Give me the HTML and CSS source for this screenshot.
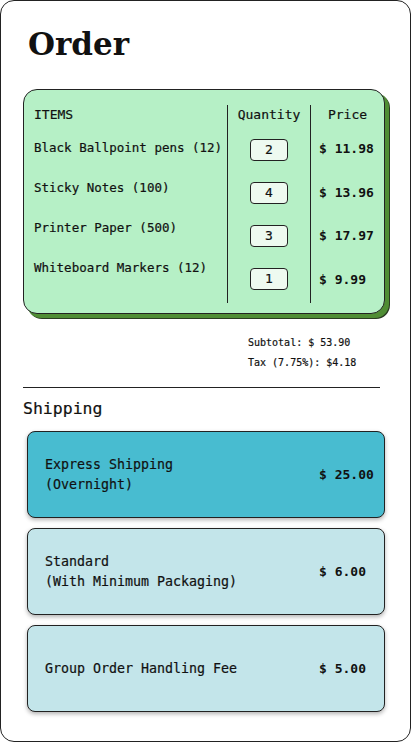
FILE: index.html
```html
<!DOCTYPE html>
<html>
<head>
<meta charset="utf-8">
<link rel="stylesheet" href="styles.css">
</head>
<body>
<div class="order">
  <h1 class="title">Order</h1>
  <div class="items-card">
    <div class="grid">
      <div class="col col-items">
        <div class="col-head head-left">ITEMS</div>
        <div class="list list-items">
          <div class="item">Black Ballpoint pens (12)</div>
          <div class="item">Sticky Notes (100)</div>
          <div class="item">Printer Paper (500)</div>
          <div class="item">Whiteboard Markers (12)</div>
        </div>
      </div>
      <div class="col col-qty">
        <div class="col-head">Quantity</div>
        <div class="list list-qty">
          <div class="qty">2</div>
          <div class="qty">4</div>
          <div class="qty">3</div>
          <div class="qty">1</div>
        </div>
      </div>
      <div class="col col-price">
        <div class="col-head">Price</div>
        <div class="list list-price">
          <div class="price">$ 11.98</div>
          <div class="price">$ 13.96</div>
          <div class="price">$ 17.97</div>
          <div class="price">$ 9.99</div>
        </div>
      </div>
    </div>
  </div>
  <div class="totals">
    <div>Subtotal: $ 53.90</div>
    <div>Tax (7.75%): $4.18</div>
  </div>
  <div class="rule"></div>
  <h2 class="ship-title">Shipping</h2>
  <div class="ship-list">
    <div class="ship-card selected">
      <div class="ship-name">Express Shipping<br>(Overnight)</div>
      <div class="ship-price">$ 25.00</div>
    </div>
    <div class="ship-card">
      <div class="ship-name">Standard<br>(With Minimum Packaging)</div>
      <div class="ship-price">$ 6.00</div>
    </div>
    <div class="ship-card">
      <div class="ship-name">Group Order Handling Fee</div>
      <div class="ship-price">$ 5.00</div>
    </div>
  </div>
</div>
</body>
</html>
```
FILE: styles.css
```css
* { box-sizing: border-box; }
html, body { margin: 0; padding: 0; background: #fff; }
body {
  font-family: "DejaVu Sans Mono", "Liberation Mono", monospace;
  color: #111;
  -webkit-text-stroke: 0.2px #111;
}
.order {
  width: 411px;
  height: 742px;
  border: 1px solid #222;
  border-radius: 14px;
  padding: 23px 0 0 0;
}
.title {
  margin: 0 0 25px 27px;
  font-family: "DejaVu Serif", "Liberation Serif", serif;
  font-weight: bold;
  font-size: 31px;
  line-height: 40px;
  height: 40px;
  -webkit-text-stroke: 0;
}
.items-card {
  margin-left: 22px;
  width: 362px;
  height: 225px;
  background: #b6f0c6;
  border: 1px solid #222;
  border-radius: 14px;
  box-shadow: 4px 4px 0 0 #4f8d34, 5px 5px 0 0 #2a3a22;
  padding: 15px 0 10px 0;
}
.grid {
  display: grid;
  grid-template-columns: 203px 83px 1fr;
  height: 198px;
}
.col { display: flex; flex-direction: column; }
.col-qty, .col-price { border-left: 1px solid #222; align-items: center; }
.col-head {
  font-size: 13px;
  line-height: 20px;
  height: 20px;
  text-align: center;
}
.head-left { padding-left: 10px; text-align: left; }
.list { display: flex; flex-direction: column; }
.list-items { padding: 13px 0 0 10px; gap: 20px; }
.item { font-size: 12.5px; line-height: 20px; height: 20px; white-space: nowrap; }
.list-qty { padding-top: 14px; gap: 21px; align-items: center; }
.qty {
  width: 38px;
  height: 22px;
  border: 1px solid #222;
  border-radius: 4px;
  background: #eefaf0;
  font-size: 13px;
  line-height: 20px;
  text-align: center;
}
.col-price { align-items: stretch; }
.list-price { padding: 14px 0 0 8px; gap: 23.5px; }
.price { font-size: 13px; font-weight: bold; line-height: 20px; height: 20px; -webkit-text-stroke: 0; }
.totals {
  margin: 19px 0 0 247px;
  font-size: 10px;
  line-height: 20px;
}
.rule {
  margin: 14px 0 0 22px;
  width: 357px;
  height: 1px;
  background: #222;
}
.ship-title {
  margin: 10px 0 0 22px;
  font-weight: normal;
  font-size: 16.5px;
  line-height: 22px;
}
.ship-list {
  margin: 11px 0 0 26px;
  width: 358px;
  display: flex;
  flex-direction: column;
  gap: 10px;
}
.ship-card {
  height: 87px;
  border: 1px solid #222;
  border-radius: 8px;
  background: #c3e5ea;
  box-shadow: 0 2px 4px rgba(0,0,0,0.3);
  display: flex;
  align-items: center;
  justify-content: space-between;
  padding: 0 10px 0 17px;
}
.ship-card.selected { background: #48bcd0; }
.ship-name { font-size: 13.3px; line-height: 20px; }
.ship-price { width: 55px; font-size: 13px; font-weight: bold; white-space: nowrap; -webkit-text-stroke: 0; }
```
